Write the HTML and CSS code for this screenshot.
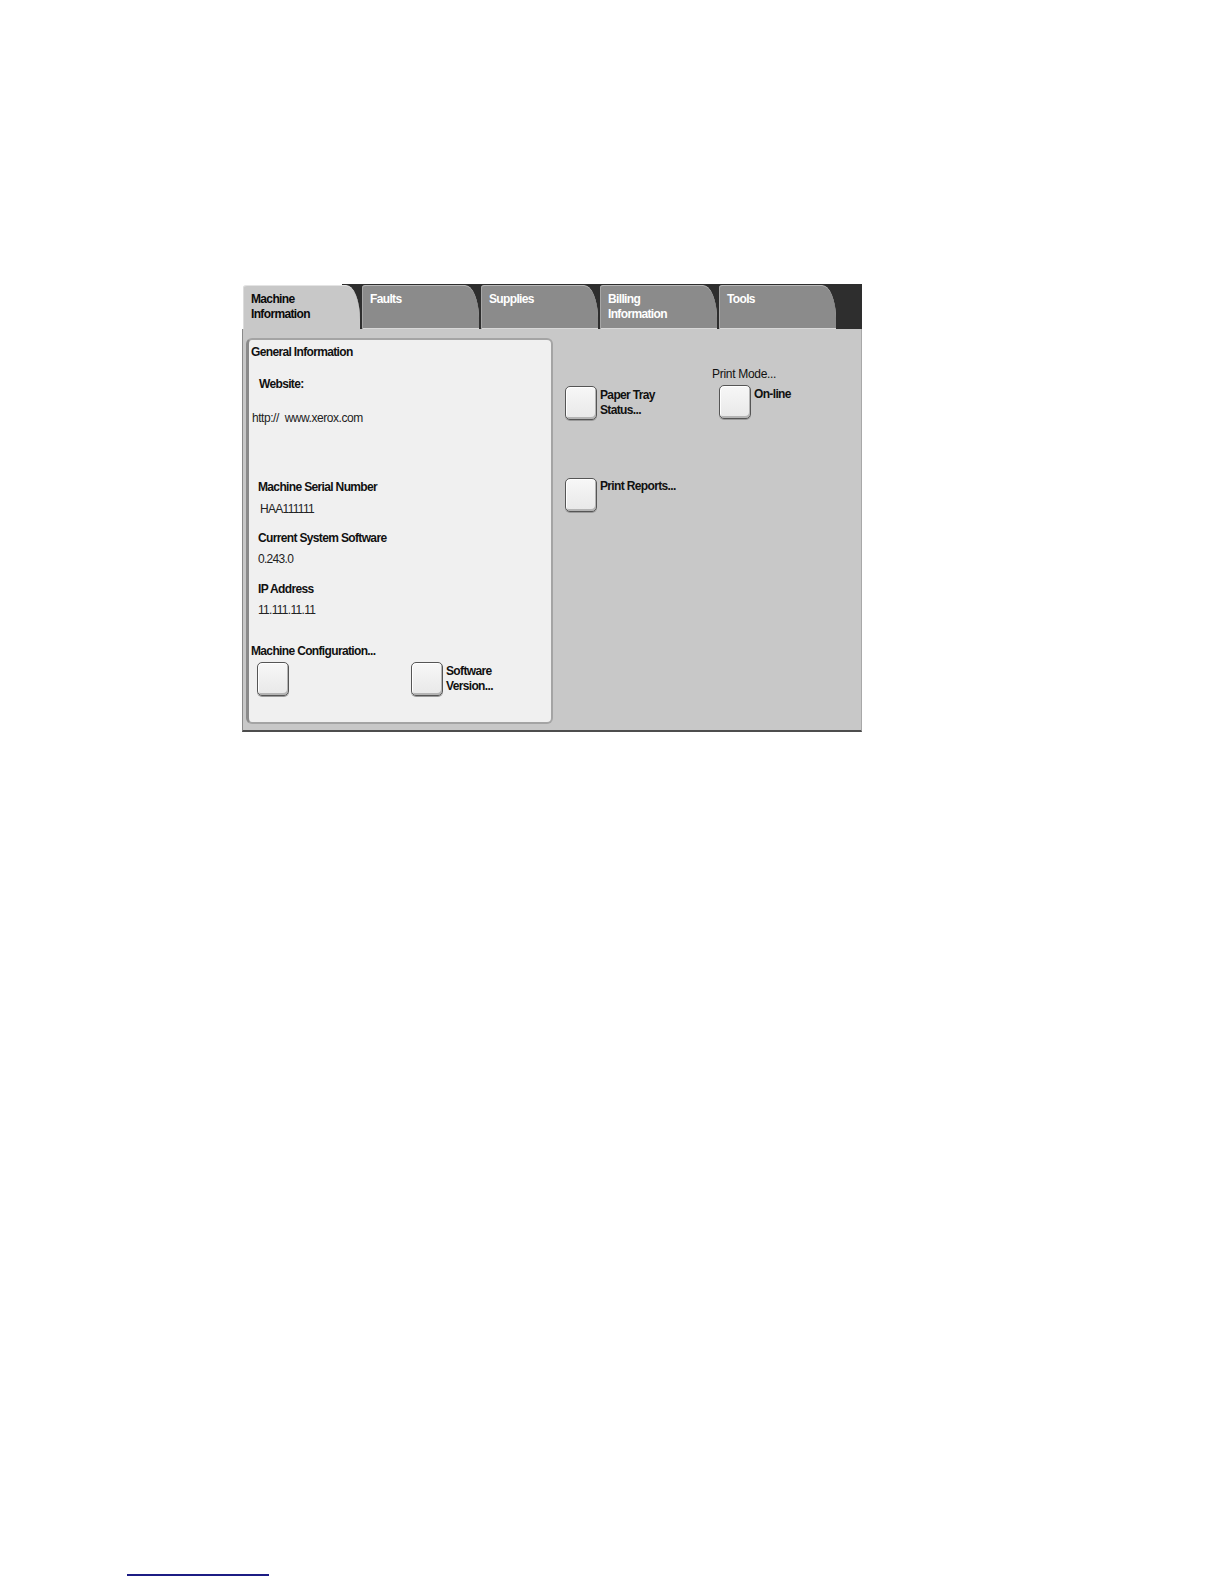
FILE: index.html
```html
<!DOCTYPE html>
<html lang="en">
<head>
<meta charset="utf-8">
<title>Machine Information</title>
<link rel="stylesheet" href="styles.css">
</head>
<body>
<div class="screen">
  <div class="tabbar">
    <div class="tab active">Machine<br>Information</div>
    <div class="tab">Faults</div>
    <div class="tab">Supplies</div>
    <div class="tab">Billing<br>Information</div>
    <div class="tab">Tools</div>
  </div>
  <div class="body">
    <div class="panel">
      <div class="ptitle">General Information</div>
      <div class="label site">Website:</div>
      <div class="value url">http://&nbsp; www.xerox.com</div>
      <div class="label serial">Machine Serial Number</div>
      <div class="value num serialval">HAA111111</div>
      <div class="label gap-sm">Current System Software</div>
      <div class="value num">0.243.0</div>
      <div class="label gap-md">IP Address</div>
      <div class="value num">11.111.11.11</div>
      <div class="config">Machine Configuration...</div>
      <div class="btnrow">
        <div class="btn"></div>
        <div class="opt softver">
          <div class="btn"></div>
          <div class="txt">Software<br>Version...</div>
        </div>
      </div>
    </div>
    <div class="right">
      <div class="row1">
        <div class="col1">
          <div class="opt tray">
            <div class="btn"></div>
            <div class="txt">Paper Tray<br>Status...</div>
          </div>
        </div>
        <div class="col2">
          <div class="modelabel">Print Mode...</div>
          <div class="opt online">
            <div class="btn"></div>
            <div class="txt">On-line</div>
          </div>
        </div>
      </div>
      <div class="opt reports">
        <div class="btn"></div>
        <div class="txt top0">Print Reports...</div>
      </div>
    </div>
  </div>
</div>
<div class="rule"></div>
</body>
</html>
```

FILE: styles.css
```css
html, body {
  margin: 0;
  padding: 0;
  background: #ffffff;
}

body {
  font-family: "Liberation Sans", Arial, sans-serif;
  font-size: 12px;
  line-height: 15px;
  letter-spacing: -0.65px;
  color: #111111;
}

.screen {
  width: 620px;
  margin: 284px 0 0 242px;
}

/* ---------- tabs ---------- */
.tabbar {
  display: flex;
  gap: 2px;
  box-sizing: border-box;
  height: 45px;
  padding: 1px 0 0 1px;
  background: linear-gradient(to right, transparent 0 100px, #2e2e2e 100px);
}

.tab {
  box-sizing: border-box;
  width: 117px;
  height: 44px;
  padding: 6px 0 0 8px;
  background: #8b8b8b;
  color: #ffffff;
  font-weight: bold;
  border-top: 1px solid #b8b8b8;
  border-radius: 3px 14px 0 0 / 3px 34px 0 0;
  box-shadow: inset 1px 0 0 #a6a6a6, inset 0 -1px 0 #d8d8d8;
}

.tab.active {
  background: #c8c8c8;
  color: #0a0a0a;
  border-top-color: #e4e4e4;
  box-shadow: inset 1px 0 0 #dcdcdc;
}

/* ---------- body ---------- */
.body {
  display: flex;
  box-sizing: border-box;
  height: 403px;
  padding: 9px 0 6px 3px;
  background: #c8c8c8;
  border-left: 1px solid #8a8a8a;
  border-right: 1px solid #a8a8a8;
  border-bottom: 2px solid #4d4d4d;
}

.panel {
  box-sizing: border-box;
  width: 307px;
  flex: none;
  padding: 5px 0 0 2px;
  background: #f0f0f0;
  border: 2px solid #a4a4a4;
  border-left: 3px solid #8a8a8a;
  border-radius: 6px;
}

.ptitle {
  font-weight: bold;
}

.label {
  font-weight: bold;
  padding-left: 7px;
}

.value {
  color: #222222;
  padding-left: 7px;
  letter-spacing: -0.45px;
}

.site {
  margin-top: 17px;
  padding-left: 8px;
}

.url {
  margin-top: 19px;
  padding-left: 1px;
}

.serial {
  margin-top: 54px;
}

.num {
  margin-top: 6px;
  letter-spacing: -0.7px;
}

.serialval {
  margin-top: 7px;
  padding-left: 9px;
}

.gap-sm {
  margin-top: 14px;
}

.gap-md {
  margin-top: 15px;
}

.config {
  margin-top: 26px;
  font-weight: bold;
}

.btnrow {
  display: flex;
  align-items: flex-start;
  margin-top: 3px;
  padding-left: 6px;
}

.softver {
  margin-left: 122px;
}

/* ---------- buttons ---------- */
.btn {
  flex: none;
  box-sizing: border-box;
  width: 32px;
  height: 34px;
  border: 1px solid #555555;
  border-radius: 5px;
  background: linear-gradient(#f7f7f7, #e8e8e8);
  box-shadow: inset 1px 1px 0 #ffffff, inset -1px -2px 0 #b4b4b4, 0 1px 0 #9a9a9a;
}

.opt {
  display: flex;
  align-items: flex-start;
  gap: 3px;
}

.txt {
  font-weight: bold;
  padding-top: 2px;
  white-space: nowrap;
}

.txt.top0 {
  padding-top: 1px;
}

/* ---------- right area ---------- */
.right {
  flex: 1;
  padding: 29px 0 0 12px;
}

.row1 {
  display: grid;
  grid-template-columns: 147px auto;
}

.tray {
  margin-top: 19px;
}

.modelabel {
  letter-spacing: -0.3px;
}

.online {
  margin-top: 3px;
  margin-left: 7px;
}

.reports {
  margin-top: 58px;
}

/* ---------- footnote rule ---------- */
.rule {
  width: 142px;
  height: 2px;
  margin: 842px 0 0 127px;
  background: #1c1c84;
}
```
